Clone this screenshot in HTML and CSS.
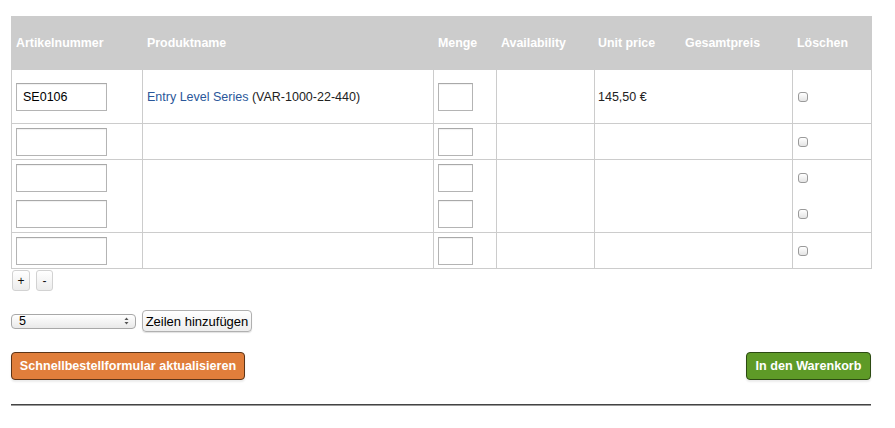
FILE: index.html
```html
<!DOCTYPE html>
<html lang="de">
<head>
<meta charset="utf-8">
<title>Schnellbestellung</title>
<link rel="stylesheet" href="styles.css">
</head>
<body>
<div class="page">
  <table class="order">
    <colgroup>
      <col class="c-art"><col class="c-name"><col class="c-qty"><col class="c-avail"><col class="c-unit"><col class="c-total"><col class="c-del">
    </colgroup>
    <thead>
      <tr>
        <th>Artikelnummer</th>
        <th>Produktname</th>
        <th>Menge</th>
        <th>Availability</th>
        <th>Unit price</th>
        <th>Gesamtpreis</th>
        <th>Löschen</th>
      </tr>
    </thead>
    <tbody>
      <tr class="r-first">
        <td><input class="in-art" type="text" value="SE0106"></td>
        <td><a class="prod" href="#">Entry Level Series</a> (VAR-1000-22-440)</td>
        <td><input class="in-qty" type="text"></td>
        <td></td>
        <td colspan="2">145,50 €</td>
        <td><input class="chk" type="checkbox"></td>
      </tr>
      <tr>
        <td><input class="in-art" type="text"></td>
        <td></td>
        <td><input class="in-qty" type="text"></td>
        <td></td>
        <td colspan="2"></td>
        <td><input class="chk" type="checkbox"></td>
      </tr>
      <tr class="r-double">
        <td><div class="stack"><input class="in-art" type="text"><input class="in-art" type="text"></div></td>
        <td></td>
        <td><div class="stack"><input class="in-qty" type="text"><input class="in-qty" type="text"></div></td>
        <td></td>
        <td colspan="2"></td>
        <td><div class="stack"><span class="cb-slot"><input class="chk" type="checkbox"></span><span class="cb-slot"><input class="chk" type="checkbox"></span></div></td>
      </tr>
      <tr>
        <td><input class="in-art" type="text"></td>
        <td></td>
        <td><input class="in-qty" type="text"></td>
        <td></td>
        <td colspan="2"></td>
        <td><input class="chk" type="checkbox"></td>
      </tr>
    </tbody>
  </table>

  <div class="pm">
    <button class="mini" type="button">+</button>
    <button class="mini" type="button">-</button>
  </div>

  <div class="addrows">
    <div class="sel">
      <span>5</span>
      <svg class="arrows" width="5" height="8" viewBox="0 0 5 8" aria-hidden="true">
        <path d="M0.5 3 L2.5 0.5 L4.5 3 Z" fill="#555"/>
        <path d="M0.5 5 L2.5 7.5 L4.5 5 Z" fill="#555"/>
      </svg>
    </div>
    <button class="btn-add" type="button">Zeilen hinzufügen</button>
  </div>

  <div class="actions">
    <button class="btn btn-orange" type="button">Schnellbestellformular aktualisieren</button>
    <button class="btn btn-green" type="button">In den Warenkorb</button>
  </div>

  <div class="rule"></div>
</div>
</body>
</html>
```

FILE: styles.css
```css
html, body {
  margin: 0;
  padding: 0;
  background: #fff;
}
body {
  font-family: "Liberation Sans", Arial, Helvetica, sans-serif;
  font-size: 12px;
  color: #222;
}
.page {
  width: 860px;
  padding: 16px 0 0 11px;
}
.order {
  width: 860px;
  border-collapse: collapse;
  table-layout: fixed;
}
.c-art { width: 131px; }
.c-name { width: 291px; }
.c-qty { width: 63px; }
.c-avail { width: 98px; }
.c-unit { width: 86px; }
.c-total { width: 112px; }
.c-del { width: 79px; }

.order th {
  background: #cccccc;
  color: #fff;
  font-weight: bold;
  font-size: 12.4px;
  text-align: left;
  height: 52px;
  padding: 0 4px;
  border: 1px solid #cccccc;
  vertical-align: middle;
}
.order th:nth-child(5) { padding-left: 3px; }
.order td {
  border: 1px solid #cccccc;
  padding: 4px 4px 3px;
  vertical-align: middle;
  font-size: 12.5px;
  color: #222;
}
.order tr.r-first td { height: 46px; }
.order tr.r-double td { padding-bottom: 4px; }
.order td:nth-child(5) { padding-left: 3px; }
.order td:last-child { padding-left: 5px; }

.prod {
  color: #2a579a;
  text-decoration: none;
}
.in-art, .in-qty {
  display: block;
  box-sizing: border-box;
  height: 28px;
  border: 1px solid #b4b4b4;
  border-top-color: #a9a9a9;
  box-shadow: inset 0 1px 1px rgba(0,0,0,0.06);
  background: #fff;
  font-family: "Liberation Sans", Arial, sans-serif;
  font-size: 12.5px;
  color: #000;
  padding: 0 6px;
  margin: 0;
}
.in-art { width: 91px; }
.in-qty { width: 35px; }
.stack {
  display: flex;
  flex-direction: column;
  gap: 8px;
}
.cb-slot {
  display: flex;
  align-items: center;
  height: 28px;
}
.chk {
  appearance: none;
  -webkit-appearance: none;
  display: block;
  width: 10px;
  height: 10px;
  margin: 0;
  border: 1px solid #9a9a9a;
  border-radius: 3px;
  background: linear-gradient(#ffffff, #e4e4e4);
  box-sizing: border-box;
}

.pm {
  display: flex;
  gap: 6px;
  padding-left: 1px;
  margin-top: 1px;
}
.mini {
  box-sizing: border-box;
  width: 18px;
  height: 21px;
  padding: 0;
  border: 1px solid #d2d2d2;
  border-radius: 3px;
  background: linear-gradient(#ffffff, #ececec);
  font-family: "Liberation Sans", Arial, sans-serif;
  font-size: 12px;
  line-height: 18px;
  color: #111;
}
.mini + .mini { width: 17px; }

.addrows {
  display: flex;
  align-items: center;
  gap: 6px;
  margin-top: 19px;
}
.sel {
  box-sizing: border-box;
  width: 125px;
  height: 15px;
  border: 1px solid #a8a8a8;
  border-radius: 4px;
  background: linear-gradient(#ffffff, #e9e9e9);
  display: flex;
  align-items: center;
  justify-content: space-between;
  padding: 0 6px 0 7px;
  font-size: 12.5px;
  color: #000;
}
.arrows {
  display: block;
}
.btn-add {
  box-sizing: border-box;
  width: 110px;
  height: 22px;
  padding: 0;
  border: 1px solid #b0b0b0;
  border-radius: 4px;
  background: linear-gradient(#ffffff, #ededed);
  box-shadow: 0 1px 1px rgba(0,0,0,0.12);
  font-family: "Liberation Sans", Arial, sans-serif;
  font-size: 13px;
  color: #000;
}

.actions {
  display: flex;
  justify-content: space-between;
  align-items: flex-start;
  margin-top: 20px;
}
.btn {
  box-sizing: border-box;
  height: 28px;
  border-radius: 4px;
  color: #fff;
  font-family: "Liberation Sans", Arial, sans-serif;
  font-weight: bold;
  font-size: 12.6px;
  padding: 0;
  white-space: nowrap;
  text-align: center;
  box-shadow: 0 2px 2px rgba(0,0,0,0.08);
}
.btn-orange {
  width: 234px;
  background: #e07e3b;
  border: 1px solid #5b3418;
}
.btn-green {
  width: 125px;
  background: #5e9a27;
  border: 1px solid #2c4a12;
}

.rule {
  margin-top: 24px;
  height: 1px;
  background: #444;
  border-bottom: 1px solid #9a9a9a;
  width: 860px;
}
```
